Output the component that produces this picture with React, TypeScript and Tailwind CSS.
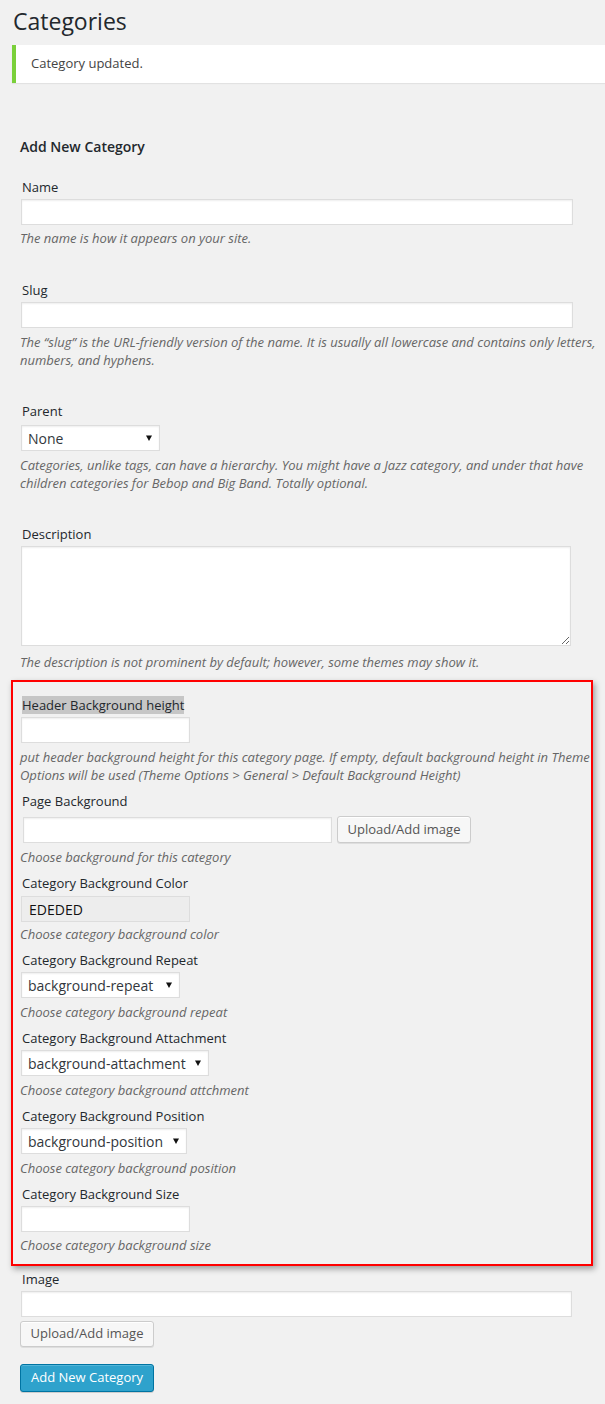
import type { ReactNode } from 'react';

const Label = ({ children, className = '' }: { children: ReactNode; className?: string }) => (
  <div className={`pl-[2px] text-[13px] leading-[18px] text-[#23282d] ${className}`}>{children}</div>
);

const Desc = ({ children, className = '' }: { children: ReactNode; className?: string }) => (
  <p className={`text-[13px] italic leading-[18px] text-[#666] ${className}`}>{children}</p>
);

const Field = ({ className = '' }: { className?: string }) => (
  <div
    className={`ml-[1px] h-[26px] border border-[#dddddd] bg-white shadow-[inset_0_1px_2px_rgba(0,0,0,0.07)] ${className}`}
  />
);

const Select = ({ value, className = '' }: { value: string; className?: string }) => (
  <div
    className={`ml-[1px] flex h-[26px] items-center justify-between border border-[#dddddd] bg-white pl-[6px] pr-[7px] text-[14px] text-[#32373c] shadow-[inset_0_1px_2px_rgba(0,0,0,0.07)] ${className}`}
  >
    <span>{value}</span>
    <svg width="6" height="6" viewBox="0 0 6 6" aria-hidden="true">
      <path d="M0 0.5h6L3 6z" fill="#111" />
    </svg>
  </div>
);

const Button = ({ children, className = '' }: { children: ReactNode; className?: string }) => (
  <button
    type="button"
    className={`flex w-[134px] items-center justify-center rounded-[3px] border border-[#cccccc] bg-[#f7f7f7] text-[13px] text-[#555] shadow-[inset_0_1px_0_#fff,0_1px_0_rgba(0,0,0,0.08)] ${className}`}
  >
    {children}
  </button>
);

export default function App() {
  return (
    <div className="min-h-screen bg-[#f1f1f1] font-['Open_Sans',sans-serif] text-[#444]">
      {/* Title + notice */}
      <div className="pl-[12px]">
        <h1 className="pl-[1px] pt-[7px] text-[23px] leading-[29px] text-[#23282d]">Categories</h1>
        <div className="mt-[9px] flex h-[38px] items-center border-l-4 border-[#7ad03a] bg-white pl-[15px] text-[13px] text-[#444] shadow-[0_1px_1px_rgba(0,0,0,0.06)]">
          Category updated.
        </div>
      </div>

      <div className="pl-[20px] pr-[5px] pb-[12px]">
        <h2 className="mt-[54px] text-[14px] font-semibold leading-[20px] text-[#23282d]">Add New Category</h2>

        {/* Name */}
        <Label className="mt-[21px]">Name</Label>
        <Field className="mt-[3px] w-[552px]" />
        <Desc className="mt-[4px]">The name is how it appears on your site.</Desc>

        {/* Slug */}
        <Label className="mt-[34px]">Slug</Label>
        <Field className="mt-[3px] w-[552px]" />
        <Desc className="mt-[5px]">
          The “slug” is the URL-friendly version of the name. It is usually all lowercase and contains only letters,
          numbers, and hyphens.
        </Desc>

        {/* Parent */}
        <Label className="mt-[33px]">Parent</Label>
        <Select value="None" className="mt-[5px] w-[139px]" />
        <Desc className="mt-[5px]">
          Categories, unlike tags, can have a hierarchy. You might have a Jazz category, and under that have children
          categories for Bebop and Big Band. Totally optional.
        </Desc>

        {/* Description */}
        <Label className="mt-[33px]">Description</Label>
        <textarea className="ml-[1px] mt-[3px] block h-[100px] w-[550px] border border-[#dddddd] bg-white shadow-[inset_0_1px_2px_rgba(0,0,0,0.07)]" />
        <Desc className="mt-[7px]">The description is not prominent by default; however, some themes may show it.</Desc>

        {/* Theme options box */}
        <div className="-ml-[9px] mt-[9px] w-[582px] border-2 border-[#ff0000] pb-[10px] pl-[7px] pt-[14px] shadow-[2px_3px_6px_rgba(0,0,0,0.35)]">
          <Label>
            <span className="bg-[#c6c6c6]">Header Background height</span>
          </Label>
          <Field className="mt-[3px] w-[169px]" />
          <Desc className="mt-[5px]">
            put header background height for this category page. If empty, default background height in Theme
            Options will be used (Theme Options &gt; General &gt; Default Background Height)
          </Desc>

          <Label className="mt-[8px]">Page Background</Label>
          <div className="mt-[6px] flex items-start gap-[5px]">
            <Field className="ml-[3px] mt-[1px] w-[309px]" />
            <Button className="h-[27px]">Upload/Add image</Button>
          </div>
          <Desc className="mt-[5px]">Choose background for this category</Desc>

          <Label className="mt-[8px]">Category Background Color</Label>
          <div className="ml-[1px] mt-[4px] flex h-[26px] w-[169px] items-center border border-[#dddddd] bg-[#ededed] pl-[7px] text-[14px] text-[#111]">
            EDEDED
          </div>
          <Desc className="mt-[3px]">Choose category background color</Desc>

          <Label className="mt-[8px]">Category Background Repeat</Label>
          <Select value="background-repeat" className="mt-[3px] w-[159px]" />
          <Desc className="mt-[5px]">Choose category background repeat</Desc>

          <Label className="mt-[8px]">Category Background Attachment</Label>
          <Select value="background-attachment" className="mt-[3px] w-[188px]" />
          <Desc className="mt-[5px]">Choose category background attchment</Desc>

          <Label className="mt-[8px]">Category Background Position</Label>
          <Select value="background-position" className="mt-[3px] w-[166px]" />
          <Desc className="mt-[5px]">Choose category background position</Desc>

          <Label className="mt-[8px]">Category Background Size</Label>
          <Field className="mt-[3px] w-[169px]" />
          <Desc className="mt-[4px]">Choose category background size</Desc>
        </div>

        {/* Image */}
        <Label className="mt-[4px]">Image</Label>
        <Field className="mt-[3px] w-[551px]" />
        <Button className="mt-[4px] h-[26px]">Upload/Add image</Button>

        <button
          type="button"
          className="mt-[17px] flex h-[28px] w-[134px] items-center justify-center rounded-[3px] border border-[#0074a2] bg-[#2ea2cc] text-[13px] text-white shadow-[inset_0_1px_0_rgba(120,200,230,0.5),0_1px_0_rgba(0,0,0,0.15)]"
        >
          Add New Category
        </button>
      </div>
    </div>
  );
}
